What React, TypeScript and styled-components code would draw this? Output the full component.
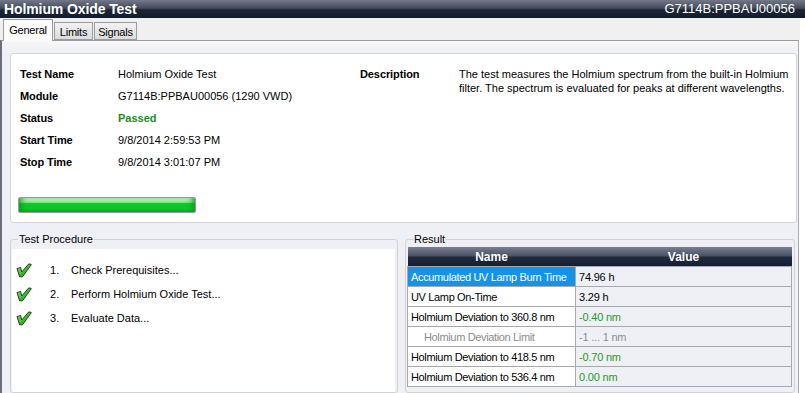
import * as React from 'react';
import styled, {createGlobalStyle} from 'styled-components';

const GlobalStyle = createGlobalStyle`
  html, body {
    margin: 0;
    padding: 0;
    background: #ffffff;
  }
  body {
    font-family: "Liberation Sans", Arial, sans-serif;
    font-size: 11px;
    color: #000;
  }
`;

const details = [
  {label: 'Test Name', value: 'Holmium Oxide Test'},
  {label: 'Module', value: 'G7114B:PPBAU00056 (1290 VWD)'},
  {label: 'Status', value: 'Passed', passed: true},
  {label: 'Start Time', value: '9/8/2014 2:59:53 PM'},
  {label: 'Stop Time', value: '9/8/2014 3:01:07 PM'},
];

const tabs = [
  {label: 'General', width: 50},
  {label: 'Limits', width: 39},
  {label: 'Signals', width: 43},
];

const steps = ['Check Prerequisites...', 'Perform Holmium Oxide Test...', 'Evaluate Data...'];

type Tone = 'normal' | 'good' | 'muted';

const results: {name: string; value: string; tone: Tone; selected?: boolean; sub?: boolean}[] = [
  {name: 'Accumulated UV Lamp Burn Time', value: '74.96 h', tone: 'normal', selected: true},
  {name: 'UV Lamp On-Time', value: '3.29 h', tone: 'normal'},
  {name: 'Holmium Deviation to 360.8 nm', value: '-0.40 nm', tone: 'good'},
  {name: 'Holmium Deviation Limit', value: '-1 ... 1 nm', tone: 'muted', sub: true},
  {name: 'Holmium Deviation to 418.5 nm', value: '-0.70 nm', tone: 'good'},
  {name: 'Holmium Deviation to 536.4 nm', value: '0.00 nm', tone: 'good'},
];

// green tick drawn like the old toolkit bitmap: slanted, thick, dark outline
const CheckIcon = () => (
  <svg width="16" height="15" viewBox="0 0 16 15">
    <defs>
      <linearGradient id="chk" x1="0" y1="0" x2="1" y2="1">
        <stop offset="0" stopColor="#9cf070" />
        <stop offset="0.6" stopColor="#34b82a" />
        <stop offset="1" stopColor="#1a8a1a" />
      </linearGradient>
    </defs>
    <path
      d="M1 5.5 L4.5 4.5 L5.8 9 L12.8 0.8 L15.3 1.6 L6.5 13.8 L3.6 13.8 Z"
      fill="url(#chk)"
      stroke="#1f3f1f"
      strokeWidth="1"
      strokeLinejoin="round"
    />
  </svg>
);

const App = () => {
  return (
    <>
      <GlobalStyle />
      <Screen>
        <TitleBar>
          <Title>Holmium Oxide Test</Title>
          <ModuleId>G7114B:PPBAU00056</ModuleId>
        </TitleBar>
        <TabStrip>
          {tabs.map((t, i) => (
            <Tab key={t.label} active={i === 0} width={t.width}>
              {t.label}
            </Tab>
          ))}
        </TabStrip>
        <Panel>
          <InfoCard>
            <InfoTop>
              <DetailGrid>
                {details.map(d => (
                  <React.Fragment key={d.label}>
                    <Label>{d.label}</Label>
                    <Value passed={d.passed}>{d.value}</Value>
                  </React.Fragment>
                ))}
              </DetailGrid>
              <DescBlock>
                <Label>Description</Label>
                <DescText>
                  The test measures the Holmium spectrum from the built-in Holmium
                  <br />
                  filter. The spectrum is evaluated for peaks at different wavelengths.
                </DescText>
              </DescBlock>
            </InfoTop>
            <Progress />
          </InfoCard>
          <LowerRow>
            <Group width={388}>
              <Legend>Test Procedure</Legend>
              <StepList>
                {steps.map((s, i) => (
                  <Step key={s}>
                    <CheckIcon />
                    <StepNum>{i + 1}.</StepNum>
                    <span>{s}</span>
                  </Step>
                ))}
              </StepList>
            </Group>
            <Group width={390}>
              <Legend>Result</Legend>
              <Table>
                <thead>
                  <tr>
                    <HeadCell style={{width: 168}}>Name</HeadCell>
                    <HeadCell>Value</HeadCell>
                  </tr>
                </thead>
                <tbody>
                  {results.map(r => (
                    <tr key={r.name}>
                      <NameCell selected={r.selected} sub={r.sub}>
                        {r.name}
                      </NameCell>
                      <ValueCell tone={r.tone}>{r.value}</ValueCell>
                    </tr>
                  ))}
                </tbody>
              </Table>
            </Group>
          </LowerRow>
        </Panel>
      </Screen>
    </>
  );
};

const Screen = styled.div`
  width: 805px;
  height: 393px;
  overflow: hidden;
  display: flex;
  flex-direction: column;
  background: #ffffff;
`;

const TitleBar = styled.div`
  height: 18px;
  flex: none;
  display: flex;
  align-items: center;
  justify-content: space-between;
  padding: 0 10px 0 4px;
  background: linear-gradient(#737888 0%, #454c5c 45%, #1b2535 55%, #121c2b 100%);
  color: #ffffff;
`;

const Title = styled.div`
  font-size: 14px;
  font-weight: bold;
  line-height: 18px;
  letter-spacing: -0.1px;
`;

const ModuleId = styled.div`
  font-size: 13px;
  line-height: 18px;
`;

const TabStrip = styled.div`
  height: 22px;
  flex: none;
  display: flex;
  align-items: flex-end;
  padding-left: 3px;
  width: 797px;
  background: #f0f0f0;
  position: relative;
  z-index: 1;
`;

const Tab = styled.div<{active?: boolean; width: number}>`
  width: ${p => p.width}px;
  height: ${p => (p.active ? '22px' : '18px')};
  line-height: ${p => (p.active ? '20px' : '18px')};
  margin-bottom: ${p => (p.active ? '-1px' : '0')};
  box-sizing: border-box;
  text-align: center;
  border: 1px solid #9a9aa0;
  border-bottom: ${p => (p.active ? 'none' : '1px solid #9a9aa0')};
  background: ${p => (p.active ? '#fbfbfb' : 'linear-gradient(#f2f2f2, #dcdcdc)')};
  font-size: 11px;
  letter-spacing: -0.2px;
  & + & {
    margin-left: 1px;
  }
`;

const Panel = styled.div`
  flex: 1;
  width: 799px;
  box-sizing: border-box;
  border-left: 2px solid #6d6e7c;
  border-right: 1px solid #a8a8b0;
  border-top: 1px solid #9a9aa0;
  background: linear-gradient(#f7f7f7 0, #eff0f5 12px);
  padding: 12px 0 0 8px;
  display: flex;
  flex-direction: column;
`;

const InfoCard = styled.div`
  width: 787px;
  height: 170px;
  box-sizing: border-box;
  background: #ffffff;
  border: 1px solid #d3d4dc;
  border-radius: 3px;
  padding: 13px 0 0 7px;
  display: flex;
  flex-direction: column;
`;

const InfoTop = styled.div`
  display: flex;
  margin-left: 2px;
`;

const DetailGrid = styled.div`
  display: grid;
  grid-template-columns: 98px 242px;
  grid-auto-rows: 22px;
  align-items: start;
`;

const Label = styled.div`
  font-weight: bold;
  font-size: 11px;
  line-height: 14px;
  letter-spacing: -0.1px;
`;

const Value = styled.div<{passed?: boolean}>`
  font-size: 11px;
  line-height: 14px;
  color: ${p => (p.passed ? '#1c8c1c' : '#000')};
  font-weight: ${p => (p.passed ? 'bold' : 'normal')};
`;

const DescBlock = styled.div`
  display: grid;
  grid-template-columns: 99px auto;
`;

const DescText = styled.div`
  font-size: 11px;
  line-height: 14px;
`;

const Progress = styled.div`
  margin-top: 20px;
  width: 178px;
  height: 16px;
  box-sizing: border-box;
  border: 1px solid #9a9a9a;
  border-radius: 2px;
  background: linear-gradient(#c8f5c8 0%, #8ee88e 30%, #0ec52c 40%, #06c82a 80%, #08a822 100%);
  box-shadow: inset 6px 0 6px -4px #069a1c, inset -6px 0 6px -4px #069a1c;
`;

const LowerRow = styled.div`
  display: flex;
  gap: 7px;
  margin-top: 9px;
  flex: 1;
`;

const Group = styled.fieldset<{width: number}>`
  width: ${p => p.width}px;
  box-sizing: border-box;
  margin: 0;
  padding: 0 2px 0 1px;
  border: 1px solid #d0d1d9;
  border-radius: 3px;
  display: flex;
  flex-direction: column;
  min-width: 0;
`;

const Legend = styled.legend`
  font-size: 11px;
  line-height: 14px;
  padding: 0 1px;
  margin-left: 6px;
`;

const StepList = styled.div`
  flex: 1;
  background: #ffffff;
  border-top: 2px solid #f2f2f5;
  margin-top: 1px;
  padding: 13px 0 0 4px;
  display: flex;
  flex-direction: column;
  gap: 8px;
`;

const Step = styled.div`
  display: flex;
  align-items: center;
  height: 16px;
  font-size: 11px;
`;

const StepNum = styled.span`
  margin-left: 18px;
  width: 21px;
`;

const Table = styled.table`
  margin-top: 1px;
  width: 385px;
  border-collapse: collapse;
  font-size: 11px;
  table-layout: fixed;
`;

const HeadCell = styled.th`
  height: 19px;
  padding: 0;
  color: #ffffff;
  font-size: 12px;
  font-weight: bold;
  background: linear-gradient(#7a7f90 0%, #4c5366 45%, #202a3b 55%, #142033 100%);
`;

const NameCell = styled.td<{selected?: boolean; sub?: boolean}>`
  height: 19px;
  padding: 0 0 0 ${p => (p.sub ? '16px' : '3px')};
  border: 1px solid #a9a9a9;
  white-space: nowrap;
  overflow: hidden;
  letter-spacing: -0.35px;
  background: ${p => (p.selected ? '#1592ea' : '#ffffff')};
  color: ${p => (p.selected ? '#ffffff' : p.sub ? '#8c8c8c' : '#000')};
`;

const ValueCell = styled.td<{tone: Tone}>`
  height: 19px;
  padding: 0 0 0 3px;
  border: 1px solid #a9a9a9;
  letter-spacing: -0.2px;
  color: ${p => (p.tone === 'good' ? '#1f9a1f' : p.tone === 'muted' ? '#8c8c8c' : '#000')};
`;

export default App;
